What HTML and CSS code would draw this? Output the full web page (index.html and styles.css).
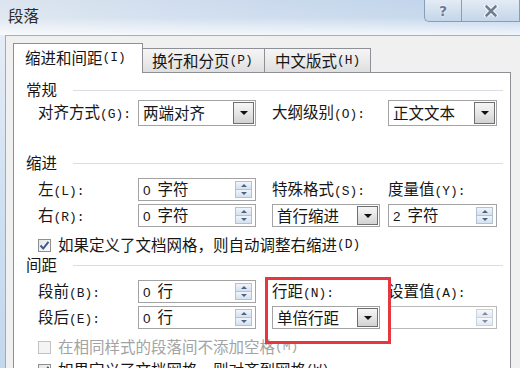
FILE: index.html
```html
<!DOCTYPE html>
<html lang="zh-CN">
<head>
<meta charset="utf-8">
<title>段落</title>
<link rel="stylesheet" href="styles.css">
</head>
<body>
<div class="window">
  <div class="titlebar">
    <div class="title">段落</div>
    <div class="caption">
      <div class="cbtn help"><span>?</span></div>
      <div class="cbtn close"><svg width="14" height="12" viewBox="0 0 14 12"><path d="M2.5 1.5 L11.5 10.5 M11.5 1.5 L2.5 10.5" stroke="#ffffff" stroke-width="4.5" stroke-linecap="round"/><path d="M2.5 1.5 L11.5 10.5 M11.5 1.5 L2.5 10.5" stroke="#6f7d90" stroke-width="2.6" stroke-linecap="round"/></svg></div>
    </div>
  </div>
  <div class="client">
    <div class="tabs">
      <div class="tab active t1">缩进和间距<span class="k">(I)</span></div>
      <div class="tab t2">换行和分页<span class="k">(P)</span></div>
      <div class="tab t3">中文版式<span class="k">(H)</span></div>
    </div>
    <div class="panel">
      <div class="ghead"><span>常规</span><i class="rule"></i></div>
      <div class="line">
        <span class="lbl wl">对齐方式<span class="k">(G):</span></span>
        <div class="box wa"><span class="val">两端对齐</span><b class="drop"></b></div>
        <span class="lbl wl2">大纲级别<span class="k">(O):</span></span>
        <div class="box wd"><span class="val">正文文本</span><b class="drop"></b></div>
      </div>

      <div class="ghead g2"><span>缩进</span><i class="rule"></i></div>
      <div class="fields">
        <div class="col col-a">
          <div class="cell"><span class="lbl wl">左<span class="k">(L):</span></span><div class="box wa"><span class="val"><span class="n">0</span>字符</span><b class="spin"><i class="up"></i><i class="dn"></i></b></div></div>
          <div class="cell"><span class="lbl wl">右<span class="k">(R):</span></span><div class="box wa"><span class="val"><span class="n">0</span>字符</span><b class="spin"><i class="up"></i><i class="dn"></i></b></div></div>
        </div>
        <div class="col col-c">
          <div class="cell"><span class="lbl">特殊格式<span class="k">(S):</span></span></div>
          <div class="cell"><div class="box wc"><span class="val">首行缩进</span><b class="drop"></b></div></div>
        </div>
        <div class="col col-d">
          <div class="cell"><span class="lbl">度量值<span class="k">(Y):</span></span></div>
          <div class="cell"><div class="box wd"><span class="val"><span class="n">2</span>字符</span><b class="spin"><i class="up"></i><i class="dn"></i></b></div></div>
        </div>
      </div>
      <div class="check c1"><span class="cb on"><svg width="11" height="11" viewBox="0 0 11 11"><path d="M1.5 5.5 L4.2 8.5 L9.5 1.8" fill="none" stroke="#3d5590" stroke-width="1.9"/></svg></span>如果定义了文档网格，则自动调整右缩进<span class="k">(D)</span></div>

      <div class="ghead g3"><span>间距</span><i class="rule"></i></div>
      <div class="fields f2">
        <div class="col col-a">
          <div class="cell"><span class="lbl wl">段前<span class="k">(B):</span></span><div class="box wa"><span class="val"><span class="n">0</span>行</span><b class="spin"><i class="up"></i><i class="dn"></i></b></div></div>
          <div class="cell"><span class="lbl wl">段后<span class="k">(E):</span></span><div class="box wa"><span class="val"><span class="n">0</span>行</span><b class="spin"><i class="up"></i><i class="dn"></i></b></div></div>
        </div>
        <div class="col col-c marked">
          <div class="cell"><span class="lbl">行距<span class="k">(N):</span></span></div>
          <div class="cell"><div class="box wc"><span class="val">单倍行距</span><b class="drop"></b></div></div>
        </div>
        <div class="col col-d">
          <div class="cell"><span class="lbl">设置值<span class="k">(A):</span></span></div>
          <div class="cell"><div class="box wd off"><span class="val"></span><b class="spin"><i class="up"></i><i class="dn"></i></b></div></div>
        </div>
      </div>
      <div class="check c2 dis"><span class="cb"></span>在相同样式的段落间不添加空格<span class="k">(M)</span></div>
      <div class="check c3"><span class="cb on"><svg width="11" height="11" viewBox="0 0 11 11"><path d="M1.5 5.5 L4.2 8.5 L9.5 1.8" fill="none" stroke="#3d5590" stroke-width="1.9"/></svg></span>如果定义了文档网格，则对齐到网格<span class="k">(W)</span></div>
    </div>
  </div>
</div>
</body>
</html>
```

FILE: styles.css
```css
* { box-sizing: border-box; margin: 0; padding: 0; }

html, body {
  width: 520px;
  height: 368px;
  overflow: hidden;
}

body {
  background: #d7e3f1;
  font-family: "Noto Sans CJK SC", "Noto Sans", sans-serif;
  font-size: 15.5px;
  line-height: 1;
  color: #161616;
}

.window {
  width: 520px;
  height: 368px;
  overflow: hidden;
  display: flex;
  flex-direction: column;
  background: linear-gradient(to bottom, #e9eff7 0%, #cddff1 60%, #c3d7ee 100%);
}

/* title bar */
.titlebar {
  height: 35px;
  flex: none;
  display: flex;
  justify-content: space-between;
  align-items: flex-start;
  background:
    linear-gradient(to bottom, rgba(255,255,255,0) 0%, rgba(255,255,255,0.1) 50%, rgba(255,255,255,0.8) 100%),
    linear-gradient(to right, #dce5ef 0%, #cfddee 35%, #bdd2ea 100%);
}

.title {
  padding: 7px 0 0 8px;
  font-size: 15.5px;
  line-height: 16px;
  color: #2a2a2a;
}

.caption { display: flex; }

.cbtn {
  height: 22px;
  display: flex;
  align-items: center;
  justify-content: center;
  border: 1px solid #8b9db5;
  border-top: none;
  background: linear-gradient(to bottom, #e3ecf6 0%, #d3e0ee 50%, #c4d6ea 100%);
}

.cbtn.help {
  width: 37px;
  border-right: none;
  border-bottom-left-radius: 5px;
  font-family: "DejaVu Sans", sans-serif;
  font-weight: bold;
  font-size: 14px;
  color: #6c7b8f;
  text-shadow: 0 0 2px #fff, 0 0 1px #fff;
}

.cbtn.close { width: 59px; }

/* client area */
.client {
  flex: 1;
  margin-left: 5px;
  border-left: 1px solid #9fabba;
  border-top: 1px solid #a3afbd;
  background: #f0f0f0;
  padding: 7px 0 0 7px;
  display: flex;
  flex-direction: column;
}

.tabs {
  display: flex;
  align-items: flex-end;
  height: 29px;
  flex: none;
  position: relative;
  z-index: 1;
}

.tab {
  height: 24px;
  display: flex;
  align-items: center;
  padding-top: 1px;
  border: 1px solid #8e9096;
  border-bottom: none;
  border-left: none;
  background: linear-gradient(to bottom, #f5f5f5 0%, #ebebeb 50%, #dedede 100%);
  white-space: nowrap;
}

.tab.active {
  height: 30px;
  margin-bottom: -1px;
  border-left: 1px solid #8e9096;
  background: #fff;
  padding-bottom: 2px;
}

.t1 { width: 130px; padding-left: 11px; }
.t2 { width: 122px; padding-left: 9px; }
.t3 { width: 106px; padding-left: 10px; }

.k {
  font-family: "Liberation Mono", monospace;
  font-size: 12.9px;
}

.n {
  font-family: "Liberation Sans", sans-serif;
  font-size: 13.5px;
  margin-right: 7px;
}

.panel {
  width: 498px;
  height: 420px;
  flex: none;
  border: 1px solid #8e9096;
  background: #fff;
  padding: 7px 7px 0 12px;
}

.ghead {
  height: 20px;
  display: flex;
  align-items: center;
}

.ghead .rule {
  flex: 1;
  height: 1px;
  margin-left: 16px;
  background: #dadde2;
}

.g2 { margin-top: 27px; }

.line {
  height: 26px;
  display: flex;
  align-items: center;
  padding-left: 12px;
}

.lbl { white-space: nowrap; }
.wl { width: 100px; flex: none; }
.wl2 { width: 116px; flex: none; margin-left: 16px; }

.box {
  height: 100%;
  flex: none;
  display: flex;
  align-items: center;
  border: 1px solid #a3a3a3;
  background: #fff;
  padding-left: 4px;
}

.box .val { flex: 1; white-space: nowrap; }

.wa { width: 118px; }
.wc { width: 108px; }
.wd { width: 109px; }

.drop {
  width: 21px;
  align-self: stretch;
  margin: 1px;
  border: 1px solid #6f6f6f;
  background: linear-gradient(to bottom, #f6f6f6 0%, #e4e4e4 55%, #d2d2d2 100%);
  display: flex;
  align-items: center;
  justify-content: center;
}

.drop::before {
  content: "";
  border-left: 4px solid transparent;
  border-right: 4px solid transparent;
  border-top: 4px solid #111;
}

.spin {
  width: 17px;
  align-self: stretch;
  margin: 2px 3px 2px 0;
  display: flex;
  flex-direction: column;
}

.spin i {
  flex: 1;
  display: flex;
  align-items: center;
  justify-content: center;
  border: 1px solid #b3c1d4;
  background: linear-gradient(to bottom, #f0f5fb 0%, #d5e1ef 100%);
}

.spin i.dn { border-top: none; }

.spin i.up::before {
  content: "";
  border-left: 3px solid transparent;
  border-right: 3px solid transparent;
  border-bottom: 3px solid #4e6283;
}

.spin i.dn::before {
  content: "";
  border-left: 3px solid transparent;
  border-right: 3px solid transparent;
  border-top: 3px solid #4e6283;
}

.box.off { border-color: #b9b9b9; }
.box.off .spin i { border-color: #c9d2de; background: linear-gradient(to bottom, #f6f8fb 0%, #e3e9f1 100%); }
.box.off .spin i.up::before { border-bottom-color: #7d8ca3; }
.box.off .spin i.dn::before { border-top-color: #7d8ca3; }

.fields {
  display: flex;
  margin-top: 5px;
}

.col {
  display: flex;
  flex-direction: column;
  gap: 3px;
}

.cell {
  height: 23px;
  display: flex;
  align-items: center;
}

.col-a { padding-left: 12px; }
.col-c { margin-left: 16px; width: 108px; }
.col-d { margin-left: 8px; width: 109px; }

.marked { position: relative; }
.marked::after {
  content: "";
  position: absolute;
  left: -7px;
  top: -3px;
  width: 120px;
  height: 61px;
  border: 3px solid #e5373d;
}

.check {
  height: 20px;
  display: flex;
  align-items: center;
  padding-left: 12px;
  white-space: nowrap;
}

.c1 { margin-top: 8px; }
.c2 { margin-top: 8px; }
.c3 { margin-top: 3px; }

.cb {
  width: 13px;
  height: 13px;
  flex: none;
  margin-right: 7px;
  border: 1px solid #8e8f8f;
  background: linear-gradient(to bottom right, #e6e6e6 0%, #fbfbfb 100%);
  display: flex;
  align-items: center;
  justify-content: center;
}

.dis { color: #a3a3a3; }
.dis .cb { border-color: #c2c2c2; background: #f4f4f4; }
```
